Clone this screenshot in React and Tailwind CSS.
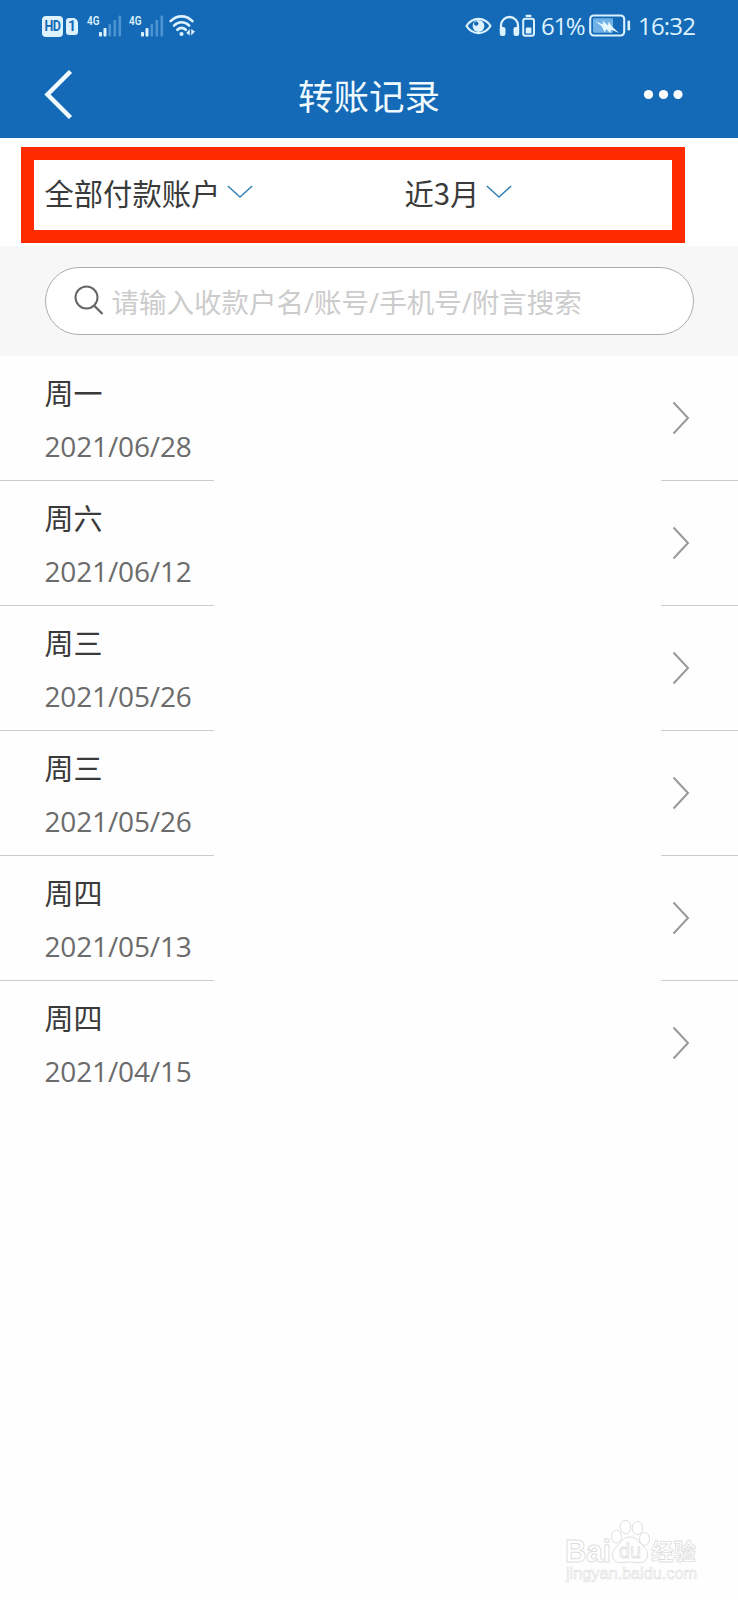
import { Fragment } from 'react';

const RECORDS = [
  { id: 1, day: '周一', date: '2021/06/28' },
  { id: 2, day: '周六', date: '2021/06/12' },
  { id: 3, day: '周三', date: '2021/05/26' },
  { id: 4, day: '周三', date: '2021/05/26' },
  { id: 5, day: '周四', date: '2021/05/13' },
  { id: 6, day: '周四', date: '2021/04/15' },
];

const SignalIcon = () => (
  <svg width="36" height="24" viewBox="0 0 36 24" fill="#dcf2ff">
    <text
      x="0"
      y="10.5"
      fontSize="13"
      fontWeight="600"
      textLength="12.5"
      lengthAdjust="spacingAndGlyphs"
      className="font-['Roboto',sans-serif]"
    >
      4G
    </text>
    <rect x="12" y="18" width="3" height="4.5" rx="0.8" />
    <rect x="16.5" y="14" width="3" height="8.5" rx="0.8" />
    <g fill="#4c93d2">
      <rect x="21.5" y="10" width="2.6" height="12.5" rx="0.8" />
      <rect x="26.5" y="6" width="2.6" height="16.5" rx="0.8" />
      <rect x="31.5" y="1.5" width="2.6" height="21" rx="0.8" />
    </g>
  </svg>
);

const WifiIcon = () => (
  <svg width="27" height="24" viewBox="0 0 27 24" fill="none" stroke="#dcf2ff" strokeWidth="2.6" strokeLinecap="round">
    <path d="M1.6 7.2C8 .8 17.2.8 23.4 7.2" />
    <path d="M5 11.6c4.4-4.4 10.8-4.4 15.2 0" />
    <path d="M8.4 15.8c2.6-2.5 5.8-2.5 8.4 0" />
    <circle cx="12.5" cy="20" r="2.1" fill="#dcf2ff" stroke="none" />
    <path d="M20.8 15v6.5l-3.6-2.5zM22.2 15v6.5l3.8-4z" fill="#dcf2ff" stroke="none" />
  </svg>
);

const EyeIcon = () => (
  <svg width="27" height="20" viewBox="0 0 27 20" fill="none">
    <path d="M1.5 10C7.5.6 19.5.6 25.5 10 19.5 19.4 7.5 19.4 1.5 10z" stroke="#dcf2ff" strokeWidth="2.2" strokeLinejoin="round" />
    <circle cx="13.5" cy="10" r="5.9" fill="#dcf2ff" />
    <circle cx="11.2" cy="7.6" r="2.2" fill="#146ab6" />
  </svg>
);

const HeadphonesIcon = () => (
  <svg width="37" height="24" viewBox="0 0 37 24" fill="#dcf2ff">
    <path d="M2 16v-4.5a8.5 8.5 0 0 1 17 0V16" fill="none" stroke="#dcf2ff" strokeWidth="2.3" />
    <rect x="0.8" y="13" width="5.7" height="9" rx="2.2" />
    <rect x="14.5" y="13" width="5.7" height="9" rx="2.2" />
    <rect x="26.5" y="0.8" width="6" height="2.2" rx="0.8" />
    <rect x="24.2" y="4.8" width="10.8" height="17" rx="2.2" fill="none" stroke="#dcf2ff" strokeWidth="2" />
    <rect x="26.8" y="13.5" width="5.6" height="6" rx="0.6" />
  </svg>
);

const BatteryIcon = () => (
  <svg width="42" height="24" viewBox="0 0 42 24">
    <rect x="1.2" y="1.5" width="34" height="20" rx="3.5" fill="none" stroke="#dcf2ff" strokeWidth="2.1" />
    <rect x="4" y="4.3" width="20" height="14.4" rx="1" fill="#6fb0e6" />
    <path d="M6 7l8 3.6-.2-3.8 5.2 4.6.6-4 3.6 5.4 6.8 6.2-8.2-3.4-.2 3.6-4.4-4.2-1.4 3.6-3.2-6.4z" fill="#e8f8ff" />
    <rect x="38.5" y="6.5" width="2.6" height="10" rx="1.2" fill="#dcf2ff" />
  </svg>
);

const StatusBar = () => (
  <div className="flex h-[50px] items-center pt-[2px] pl-[42px] font-['Open_Sans',sans-serif] text-[#dcf2ff]">
    <div className="flex h-[21px] w-[21px] items-center justify-center rounded-[4px] bg-[#dcf2ff]">
      <span className="scale-y-120 font-['Roboto',sans-serif] text-[12.5px] leading-none font-bold tracking-[-0.5px] text-[#146ab6]">HD</span>
    </div>
    <div className="ml-[3px] flex h-[17px] w-[12px] items-center justify-center rounded-[3px] rounded-tr-[5px] bg-[#dcf2ff]">
      <span className="font-['Roboto',sans-serif] text-[14px] leading-none font-bold text-[#146ab6]">1</span>
    </div>
    <div className="ml-[9px]"><SignalIcon /></div>
    <div className="ml-[6px]"><SignalIcon /></div>
    <div className="ml-[4px]"><WifiIcon /></div>
    <div className="ml-[269px]"><EyeIcon /></div>
    <div className="ml-[7px]"><HeadphonesIcon /></div>
    <span className="ml-[5px] w-[48px] text-[24px] leading-none tracking-[-1.3px]">61%</span>
    <BatteryIcon />
    <span className="ml-[7px] text-[24px] leading-none tracking-[-0.8px]">16:32</span>
  </div>
);

const TitleBar = () => (
  <div className="flex h-[88px] items-center text-white">
    <div className="flex w-[120px] pl-[43px]">
      <svg width="30" height="50" viewBox="0 0 30 50" fill="none" stroke="#f0faff" strokeWidth="4.5">
        <path d="M27.5 2.5L4.5 25.5 27.5 48.5" />
      </svg>
    </div>
    <h1 className="flex-1 pt-px text-center text-[35.5px] leading-[40px] text-[#f0faff]">转账记录</h1>
    <div className="flex w-[120px] justify-end pr-[54px]">
      <svg width="42" height="12" viewBox="0 0 42 12" fill="#fff">
        <circle cx="6.5" cy="6.5" r="4.6" />
        <circle cx="21.5" cy="6.5" r="4.6" />
        <circle cx="36" cy="6.5" r="4.6" />
      </svg>
    </div>
  </div>
);

const DownArrow = () => (
  <svg width="26" height="14" viewBox="0 0 26 14" fill="none" stroke="#3480b5" strokeWidth="1.5">
    <path d="M0.8 1L13 12 25.2 1" />
  </svg>
);

const FilterBar = () => (
  <div className="h-[108px] bg-white pt-[9px] pl-[21px]">
    <div className="flex h-[96px] w-[664px] items-center border-[13px] border-[#ff2a00] pb-[6px] pl-[10.5px] text-[29.3px] leading-[36px] text-[#3a3a3a]">
      <div className="flex w-[360px] items-center gap-[7px]">
        <span>全部付款账户</span>
        <DownArrow />
      </div>
      <div className="flex items-center gap-[7px]">
        <span>近3月</span>
        <DownArrow />
      </div>
    </div>
  </div>
);

const SearchBar = () => (
  <div className="h-[110px] bg-[#f7f7f7] pt-[21px] pr-[44.5px] pl-[44.5px]">
    <div className="flex h-[68px] items-center rounded-full border border-[#adadad] bg-white pl-[28px]">
      <svg className="mb-[2px]" width="30" height="30" viewBox="0 0 30 30" fill="none" stroke="#666" strokeWidth="2">
        <circle cx="12.5" cy="12.5" r="11" />
        <path d="M20 20.5l8.5 8.5" strokeWidth="2.3" />
      </svg>
      <span className="pt-[4px] pl-[8px] font-['Open_Sans','Noto_Sans_CJK_SC',sans-serif] text-[27.5px] leading-[36px] text-[#ccc]">
        请输入收款户名/账号/手机号/附言搜索
      </span>
    </div>
  </div>
);

const RecordRow = ({ day, date }) => (
  <div className="flex h-[124.2px] items-start justify-between pr-[48px] pl-[44.5px]">
    <div className="pt-[20px]">
      <div className="text-[29px] leading-[32px] text-[#3a3a3a]">{day}</div>
      <div className="mt-[22px] font-['Open_Sans',sans-serif] text-[28px] leading-[32px] tracking-[-0.15px] text-[#6b6b6b]">{date}</div>
    </div>
    <svg className="mt-[45px]" width="18" height="34" viewBox="0 0 18 34" fill="none" stroke="#999" strokeWidth="2">
      <path d="M1.5 1.5L16 17 1.5 32.5" />
    </svg>
  </div>
);

// Divider is only visible at both ends, the middle part of each row is blanked out
const Divider = () => (
  <div className="flex h-px justify-between">
    <div className="w-[214px] bg-[#ccc]" />
    <div className="w-[77px] bg-[#ccc]" />
  </div>
);

const Watermark = () => (
  <svg className="absolute right-[34px] bottom-[12px]" width="140" height="72" viewBox="0 0 140 72" fill="#fff" stroke="#dedede" strokeWidth="1">
    <g className="font-['Liberation_Sans','Noto_Sans_CJK_SC',sans-serif]" fontWeight="700">
      <text x="1" y="45.5" fontSize="31" textLength="46" lengthAdjust="spacingAndGlyphs">Bai</text>
      <path d="M66 21c6 0 8 4 12 8 5 5 7 8 5 13-3 7-10 4-17 4s-14 3-17-4c-2-5 0-8 5-13 4-4 6-8 12-8z" />
      <ellipse cx="52.5" cy="20.5" rx="5" ry="6.5" />
      <ellipse cx="61.5" cy="11" rx="5.3" ry="6.7" />
      <ellipse cx="73.5" cy="12" rx="5.3" ry="6.5" />
      <ellipse cx="80.5" cy="23" rx="5" ry="6.5" />
      <text x="55" y="42" fontSize="20" fontWeight="400" strokeWidth="0.8" textLength="22" lengthAdjust="spacingAndGlyphs">du</text>
      <text x="87" y="44" fontSize="22.5" strokeWidth="0.8">经验</text>
    </g>
    <text x="2" y="63" fontSize="16" textLength="131" lengthAdjust="spacingAndGlyphs" strokeWidth="0.6" className="font-['Liberation_Sans',sans-serif]">
      jingyan.baidu.com
    </text>
  </svg>
);

const App = () => {
  return (
    <div className="relative h-[1600px] w-[738px] overflow-hidden bg-[#fefefe] font-['Noto_Sans_CJK_SC',sans-serif]">
      <header className="bg-[#146ab6]">
        <StatusBar />
        <TitleBar />
      </header>
      <FilterBar />
      <SearchBar />
      <main className="-mt-px pt-[0.5px]">
        {RECORDS.map((record, index) => (
          <Fragment key={record.id}>
            <RecordRow day={record.day} date={record.date} />
            {index < RECORDS.length - 1 && <Divider />}
          </Fragment>
        ))}
      </main>
      <Watermark />
    </div>
  );
};

export default App;
